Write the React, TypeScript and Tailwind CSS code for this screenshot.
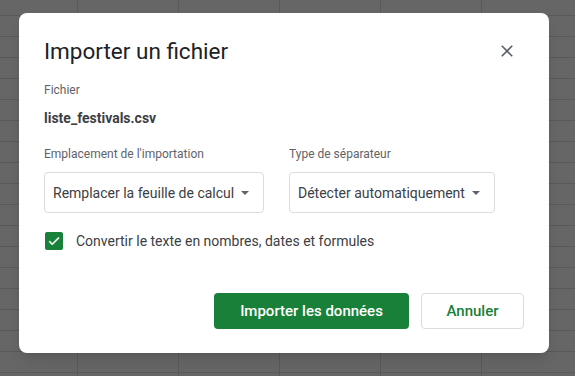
import React from "react";

function ArrowDown() {
  return (
    <svg width="8" height="4" viewBox="0 0 8 4" className="shrink-0">
      <path d="M0 0h8L4 4z" fill="#5f6368" />
    </svg>
  );
}

function SelectBox({ label, value, width }: { label: string; value: string; width: string }) {
  return (
    <div className="flex flex-col">
      <span className="text-[12px] leading-4 text-[#5f6368]">{label}</span>
      <div
        className={`mt-[10px] flex h-[41px] items-center justify-between rounded-[4px] border border-[#dadce0] pl-[8px] pr-[14px] ${width}`}
      >
        <span className="text-[14px] leading-5 text-[#3c4043]">{value}</span>
        <ArrowDown />
      </div>
    </div>
  );
}

export default function App() {
  return (
    <div className="h-[376px] w-[575px] overflow-hidden bg-[#666666] bg-[linear-gradient(to_right,#595959_1px,transparent_1px),linear-gradient(to_bottom,#595959_1px,transparent_1px)] bg-[length:101px_21px] bg-[position:77px_15px] pl-[19px] pt-[13px] font-['Roboto',sans-serif]">
      <div className="flex h-[340px] w-[530px] flex-col rounded-[8px] bg-white px-[25px] pt-[22px] pb-[24px] shadow-lg">
        <div className="flex h-[32px] items-center justify-between">
          <h1 className="text-[22.5px] leading-8 text-[#202124]">Importer un fichier</h1>
          <button className="mr-[7px] flex h-[20px] w-[20px] items-center justify-center text-[#5f6368]">
            <svg width="20" height="20" viewBox="0 0 24 24">
              <path
                d="M19 6.41L17.59 5 12 10.59 6.41 5 5 6.41 10.59 12 5 17.59 6.41 19 12 13.41 17.59 19 19 17.59 13.41 12z"
                fill="currentColor"
              />
            </svg>
          </button>
        </div>

        <span className="mt-[15px] text-[12px] leading-4 text-[#5f6368]">Fichier</span>
        <span className="mt-[10px] text-[14px] font-bold leading-5 text-[#3c4043]">liste_festivals.csv</span>

        <div className="mt-[18px] flex gap-[25px]">
          <SelectBox label="Emplacement de l'importation" value="Remplacer la feuille de calcul" width="w-[220px]" />
          <SelectBox label="Type de séparateur" value="Détecter automatiquement" width="w-[206px]" />
        </div>

        <label className="mt-[18px] ml-[1px] flex items-center gap-[13px]">
          <span className="flex h-[18px] w-[18px] items-center justify-center rounded-[2px] bg-[#188038]">
            <svg width="14" height="14" viewBox="0 0 24 24">
              <path d="M9 16.17L4.83 12l-1.42 1.41L9 19 21 7l-1.41-1.41z" fill="#fff" stroke="#fff" strokeWidth="1" />
            </svg>
          </span>
          <span className="text-[14px] leading-5 text-[#3c4043]">Convertir le texte en nombres, dates et formules</span>
        </label>

        <div className="mt-auto flex justify-end gap-[12px]">
          <button className="h-[36px] w-[195px] rounded-[4px] bg-[#188038] text-[15px] font-medium text-white">
            Importer les données
          </button>
          <button className="h-[36px] w-[103px] rounded-[4px] border border-[#dadce0] bg-white text-[15px] font-medium text-[#188038]">
            Annuler
          </button>
        </div>
      </div>
    </div>
  );
}
